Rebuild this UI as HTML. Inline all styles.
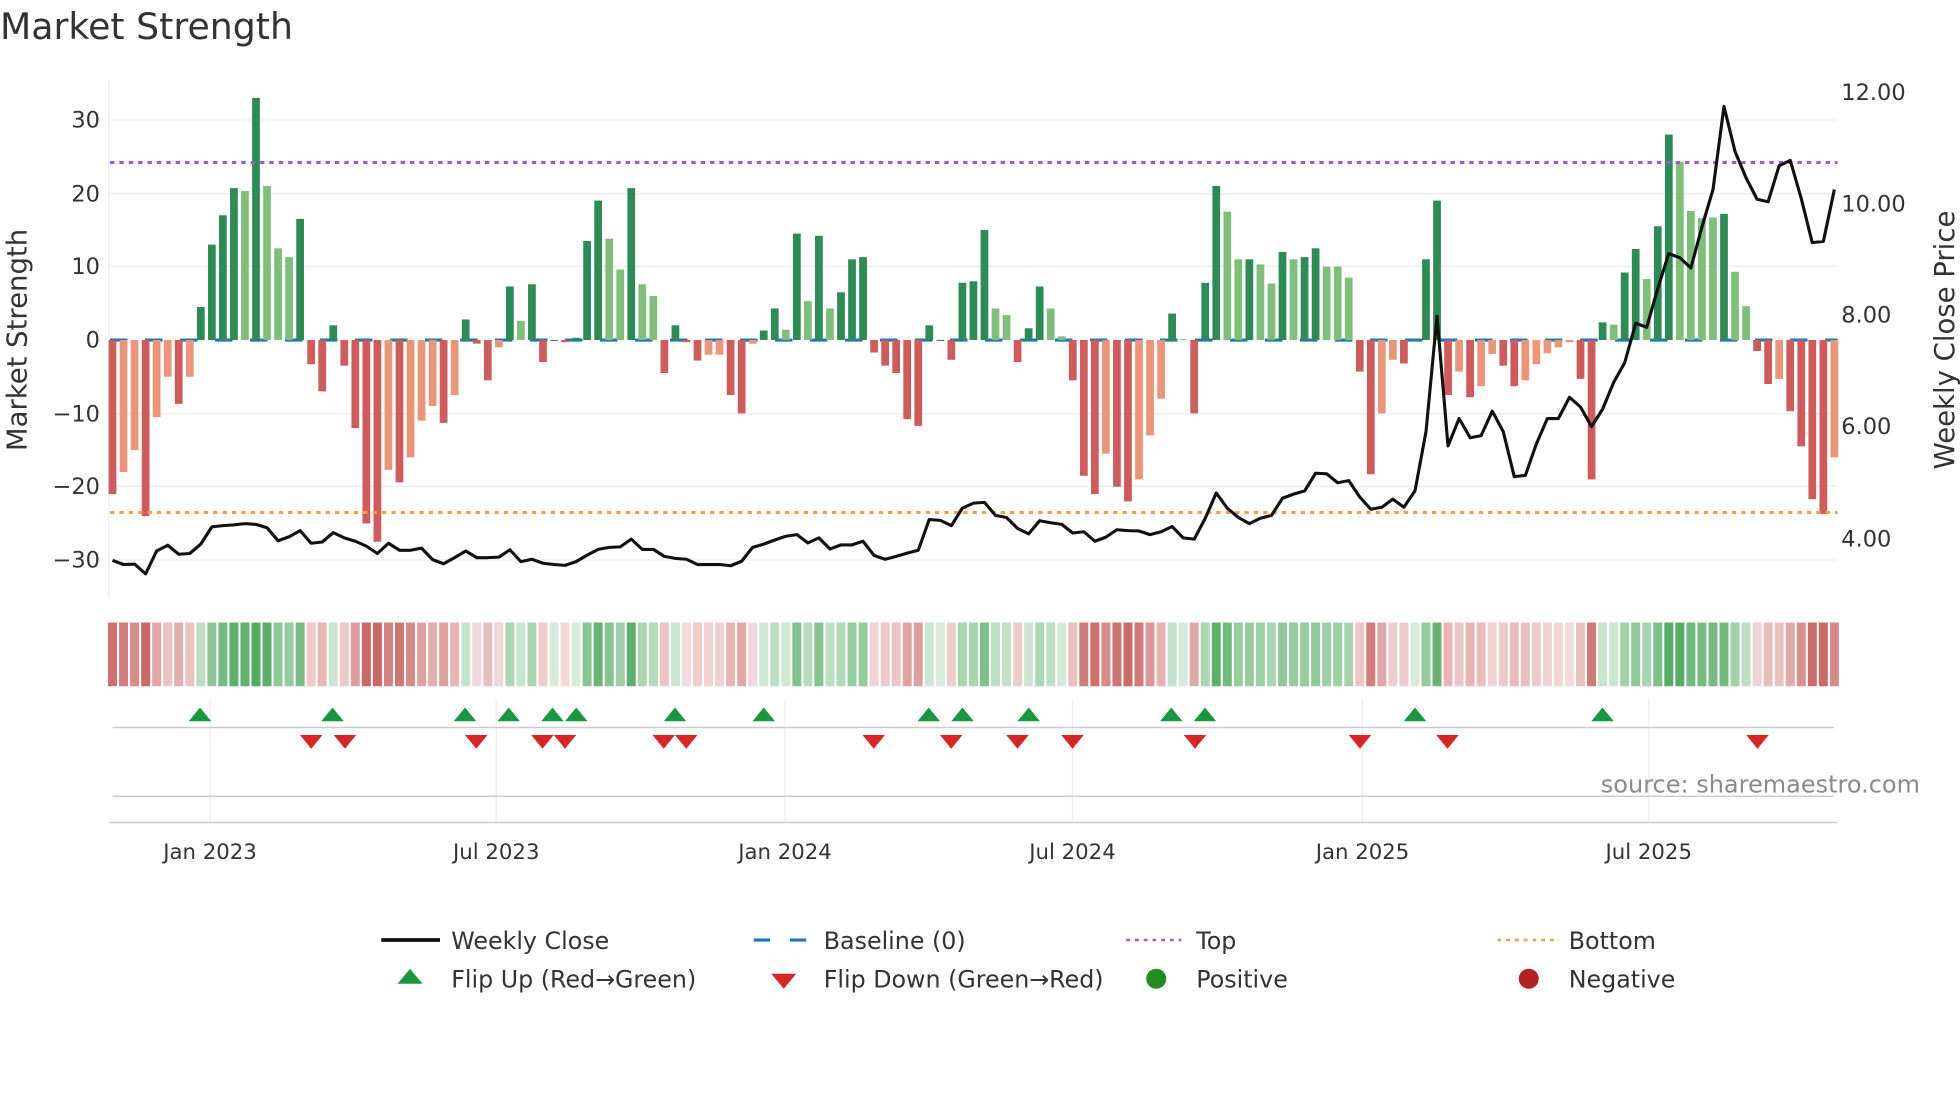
<!DOCTYPE html>
<html><head><meta charset="utf-8"><style>
html,body{margin:0;padding:0;background:#fff;width:1960px;height:1102px;overflow:hidden}
svg{display:block}
text{font-family:"DejaVu Sans","Liberation Sans",sans-serif;fill:#333}
</style></head><body>
<svg id="s" width="1960" height="1102" viewBox="0 0 1568 881.6" xmlns="http://www.w3.org/2000/svg">
<text x="0" y="31" font-size="29">Market Strength</text>
<g stroke="#eceef2" stroke-width="1">
<line x1="87" y1="96" x2="1470" y2="96"/><line x1="87" y1="155" x2="1470" y2="155"/><line x1="87" y1="213" x2="1470" y2="213"/>
<line x1="87" y1="331" x2="1470" y2="331"/><line x1="87" y1="389" x2="1470" y2="389"/><line x1="87" y1="448" x2="1470" y2="448"/>
<line x1="87" y1="65" x2="87" y2="478"/>
</g>
<g font-size="18" text-anchor="end">
<text x="80" y="102">30</text><text x="80" y="161">20</text><text x="80" y="219">10</text><text x="80" y="278">0</text>
<text x="80" y="337">−10</text><text x="80" y="395">−20</text><text x="80" y="454">−30</text>
</g>
<g font-size="18">
<text x="1473" y="80">12.00</text><text x="1473" y="169">10.00</text><text x="1473" y="258">8.00</text><text x="1473" y="347">6.00</text><text x="1473" y="437">4.00</text>
</g>
<text font-size="22" transform="translate(21,272) rotate(-90)" text-anchor="middle">Market Strength</text>
<text font-size="22" transform="translate(1563,272) rotate(-90)" text-anchor="middle">Weekly Close Price</text>
<line x1="88" y1="272" x2="1470" y2="272" stroke="#1f77b4" stroke-width="2.5" stroke-dasharray="14,14"/>
<g id="bars"></g>
<line x1="88" y1="130" x2="1470" y2="130" stroke="#9b59d6" stroke-width="2.4" stroke-dasharray="3.5,4"/>
<line x1="88" y1="410" x2="1470" y2="410" stroke="#f0a050" stroke-width="2.4" stroke-dasharray="3.5,4"/>
<polyline id="price" fill="none" stroke="#111" stroke-width="2.5" stroke-linejoin="round"/>
<g id="heat"></g>
<g stroke="#eee" stroke-width="1">
<line x1="168" y1="560" x2="168" y2="658"/><line x1="397" y1="560" x2="397" y2="658"/><line x1="628" y1="560" x2="628" y2="658"/>
<line x1="858" y1="560" x2="858" y2="658"/><line x1="1090" y1="560" x2="1090" y2="658"/><line x1="1319" y1="560" x2="1319" y2="658"/>
</g>
<line x1="90" y1="582" x2="1467" y2="582" stroke="#ccc" stroke-width="1.2"/>
<line x1="90" y1="637" x2="1467" y2="637" stroke="#ccc" stroke-width="1.2"/>
<line x1="87" y1="658" x2="1470" y2="658" stroke="#ccc" stroke-width="1.2"/>
<g id="mk"></g>
<text x="1536" y="634" font-size="19.2" text-anchor="end" style="fill:#8a8a8a">source: sharemaestro.com</text>
<g font-size="17" text-anchor="middle">
<text x="168" y="687">Jan 2023</text><text x="397" y="687">Jul 2023</text><text x="628" y="687">Jan 2024</text>
<text x="858" y="687">Jul 2024</text><text x="1090" y="687">Jan 2025</text><text x="1319" y="687">Jul 2025</text>
</g>
<g font-size="19">
<line x1="305" y1="752" x2="352" y2="752" stroke="#111" stroke-width="3"/><text x="361" y="759">Weekly Close</text>
<line x1="603" y1="752" x2="645" y2="752" stroke="#1f77b4" stroke-width="2.5" stroke-dasharray="13,16"/><text x="659" y="759">Baseline (0)</text>
<line x1="901" y1="752" x2="945" y2="752" stroke="#9b59d6" stroke-width="2" stroke-dasharray="3,4"/><text x="957" y="759">Top</text>
<line x1="1198" y1="752" x2="1243" y2="752" stroke="#f0a050" stroke-width="2" stroke-dasharray="3,4"/><text x="1255" y="759">Bottom</text>
<polygon points="328,775 338,787 318,787" fill="#1a9641"/><text x="361" y="790">Flip Up (Red→Green)</text>
<polygon points="617,779 637,779 627,791" fill="#d62728"/><text x="659" y="790">Flip Down (Green→Red)</text>
<circle cx="925" cy="783" r="8" fill="#228b22"/><text x="957" y="790">Positive</text>
<circle cx="1223" cy="783" r="8" fill="#b22222"/><text x="1255" y="790">Negative</text>
</g>
</svg>
<script>
var B="-21l,-18s,-15s,-24l,-10.5s,-5s,-8.7l,-5s,4.5d,13d,17d,20.7d,20.3s,33d,21s,12.5s,11.3s,16.5d,-3.3l,-7l,2d,-3.5l,-12l,-25l,-27.5l,-17.7s,-19.4l,-16s,-11s,-9s,-11.3l,-7.5s,2.8d,-0.5l,-5.5l,-1s,7.3d,2.6s,7.6d,-3l,0d,-0.3l,0.3d,13.5d,19d,13.8s,9.6s,20.7d,7.6s,6s,-4.5l,2d,-0.3l,-2.8l,-2s,-2s,-7.5l,-10l,-0.5s,1.3d,4.3d,1.4s,14.5d,5.3s,14.2d,4.3s,6.5d,11d,11.3d,-1.7l,-3.5l,-4.5l,-10.8l,-11.7l,2d,0d,-2.7l,7.8d,8d,15d,4.3s,3.4s,-3l,1.6d,7.3d,4.3s,0.5s,-5.5l,-18.5l,-21l,-15.5s,-20l,-22l,-19s,-13s,-8s,3.6d,0.1s,-10l,7.8d,21d,17.5s,11s,11d,10.3s,7.7s,12d,11s,11.3d,12.5d,10s,10s,8.5s,-4.3l,-18.3l,-10s,-2.7s,-3.2l,0d,11d,19d,-7.5l,-4.3s,-7.8l,-6.3s,-1.9s,-3.5l,-6.3l,-5.5s,-3.3s,-1.8s,-1s,-0.3s,-5.3l,-19l,2.4d,2.1s,9.2d,12.4d,8.3s,15.5d,28d,24.3s,17.6s,16.6s,16.7s,17.2d,9.3s,4.6s,-1.5l,-6l,-5.3s,-9.7l,-14.5l,-21.7l,-23.7l,-16s".split(",");
var P=[1225,1235,1234,1258,1202,1188,1210,1208,1185,1143,1140,1138,1135,1137,1145,1177,1167,1152,1183,1180,1157,1170,1178,1190,1208,1183,1200,1200,1195,1223,1233,1218,1202,1218,1218,1217,1199,1228,1222,1232,1235,1237,1228,1212,1198,1193,1192,1173,1198,1198,1215,1220,1222,1235,1235,1235,1238,1227,1193,1185,1175,1166,1162,1182,1170,1197,1187,1187,1178,1213,1222,1215,1207,1200,1125,1127,1140,1097,1085,
1083,1115,1120,1147,1160,1128,1133,1137,1158,1155,1178,1168,1150,1152,1153,1162,1155,1142,1170,1173,1122,1060,1097,1120,1135,1122,1115,1073,1063,1055,1012,1013,1035,1030,1070,1100,1095,1075,1095,1055,910,628,945,878,925,920,860,910,1020,1017,940,878,878,826,850,898,855,790,742,645,655,560,475,485,510,410,318,115,225,290,342,348,260,247,340,448,445,318];
var ns="http://www.w3.org/2000/svg",bars=document.getElementById("bars"),heat=document.getElementById("heat");
var n=B.length,step=(1467.5-90)/(n-1),pts=[];
for(var i=0;i<n;i++){var s=B[i],t=s.slice(-1),v=parseFloat(s),x=90+i*step;
 var c=v>=0?(t=="d"?"#2e8b57":"#7fbf7b"):(t=="l"?"#cd5c5c":"#e9967a");
 var r=document.createElementNS(ns,"rect");var y=272-v*5.87;
 r.setAttribute("x",x-3.1);r.setAttribute("width",6.2);r.setAttribute("y",Math.min(y,272));r.setAttribute("height",Math.max(Math.abs(v*5.87),0.8));r.setAttribute("fill",c);bars.appendChild(r);
 var h=document.createElementNS(ns,"rect");var a=Math.min(0.85,0.2+Math.abs(v)/34);
 h.setAttribute("x",x-3.6);h.setAttribute("width",7.2);h.setAttribute("y",498);h.setAttribute("height",51);
 h.setAttribute("fill",v>=0?"#3a9d4a":"#c0504d");h.setAttribute("fill-opacity",a);heat.appendChild(h);
 if(i<P.length)pts.push(x.toFixed(1)+","+(431-(1172-P[i])*0.3272).toFixed(1));}
document.getElementById("price").setAttribute("points",pts.join(" "));
var mk=document.getElementById("mk"),h2="";
[160,266,372,407,442,461,540,611,743,770,823,937,964,1132,1282].forEach(function(x){h2+='<polygon points="'+x+',566 '+(x+9)+',577 '+(x-9)+',577" fill="#1a9641"/>';});
[249,276,381,434,452,531,549,699,761,814,858,956,1088,1158,1406].forEach(function(x){h2+='<polygon points="'+(x-9)+',588 '+(x+9)+',588 '+x+',599" fill="#d62728"/>';});
mk.innerHTML=h2;
</script>
</body></html>
